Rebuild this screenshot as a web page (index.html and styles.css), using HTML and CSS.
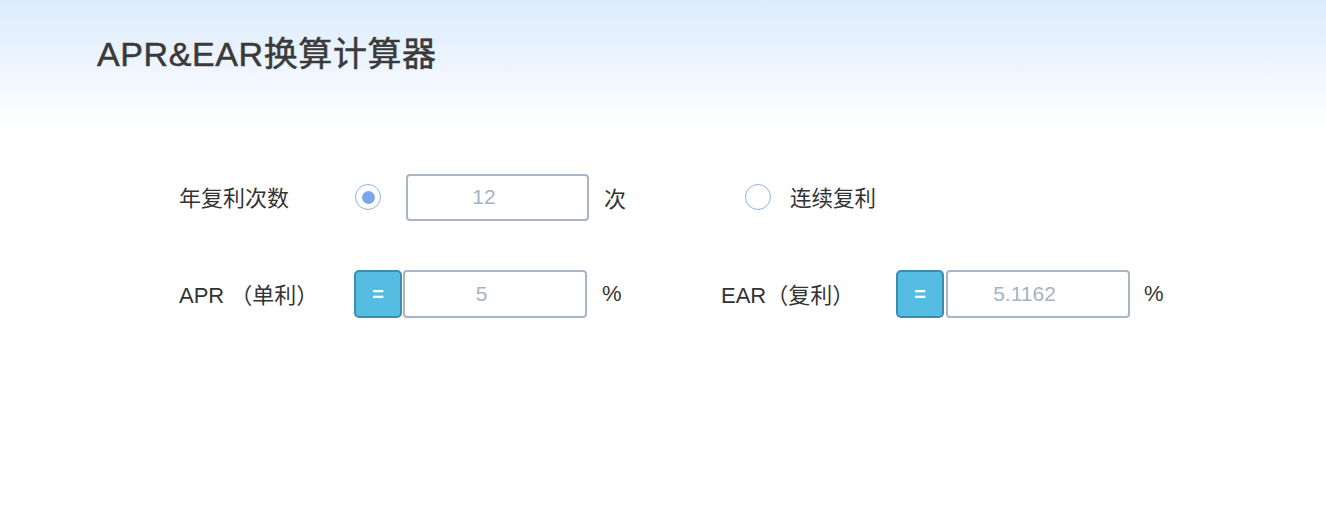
FILE: index.html
```html
<!DOCTYPE html>
<html lang="zh-CN">
<head>
  <meta charset="UTF-8">
  <title>APR&amp;EAR换算计算器</title>
  <link rel="stylesheet" href="styles.css">
</head>
<body>

<div class="header">
  <h1>APR&amp;EAR换算计算器</h1>
</div>

<div class="calc">
  <div class="row">
    <span class="label">年复利次数</span>
    <span class="radio checked"></span>
    <input type="text" class="field field-times" value="12">
    <span class="unit">次</span>
    <span class="radio radio-cont"></span>
    <span class="label-cont">连续复利</span>
  </div>

  <div class="row">
    <span class="label">APR （单利）</span>
    <button class="eq">=</button>
    <input type="text" class="field" value="5">
    <span class="unit">%</span>
    <span class="label label-ear">EAR（复利）</span>
    <button class="eq">=</button>
    <input type="text" class="field field-ear" value="5.1162">
    <span class="unit unit-ear">%</span>
  </div>
</div>

</body>
</html>
```

FILE: styles.css
```css
body {
  margin: 0;
  font-family: "Liberation Sans", "Noto Sans CJK SC", sans-serif;
  color: #333;
  background: #fff;
}

.header {
  height: 130px;
  background: linear-gradient(#dcebfd, #ffffff);
  padding: 32px 0 0 97px;
  box-sizing: border-box;
}

h1 {
  margin: 0;
  font-size: 34px;
  line-height: 44px;
  font-weight: normal;
  letter-spacing: 0.6px;
  color: #3a3a3a;
  -webkit-text-stroke: 0.5px #3a3a3a;
}

.calc {
  padding: 43px 0 0 179px;
}

.row {
  display: flex;
  align-items: center;
  height: 48px;
  margin-bottom: 49px;
}

.label {
  width: 175px;
  font-size: 22px;
  margin-top: -2px;
}

.radio {
  width: 26px;
  height: 26px;
  box-sizing: border-box;
  border: 1.5px solid #8fb0ee;
  border-radius: 50%;
  display: flex;
  align-items: center;
  justify-content: center;
  margin-left: 1px;
  margin-right: 24px;
}

.radio.checked::after {
  content: "";
  width: 13px;
  height: 13px;
  border-radius: 50%;
  background: #7ea6ea;
}

.radio-cont {
  margin-left: 121px;
  margin-right: 19px;
}

.label-cont {
  font-size: 21.5px;
  margin-top: -2px;
}

.field {
  width: 184px;
  height: 48px;
  box-sizing: border-box;
  border: 2px solid #a9b5c6;
  border-radius: 4px;
  text-align: center;
  font-family: "Liberation Sans", Arial, sans-serif;
  font-size: 21px;
  color: #a5b3c4;
  background: #fff;
  padding: 0 27px 0 0;
  margin-left: 1px;
}

.field-times {
  width: 183px;
  height: 47px;
}

.unit {
  margin-left: 15px;
  font-size: 22px;
  width: 20px;
}

.label-ear {
  margin-left: 99px;
}

.eq {
  width: 48px;
  height: 48px;
  box-sizing: border-box;
  background: #55bce2;
  border: 2px solid #3a8db0;
  border-radius: 5px;
  color: #fff;
  font-family: "Liberation Sans", Arial, sans-serif;
  font-size: 20px;
  font-weight: bold;
  padding: 0;
}

.field-ear {
  margin-left: 2px;
}

.unit-ear {
  margin-left: 14px;
}
```
